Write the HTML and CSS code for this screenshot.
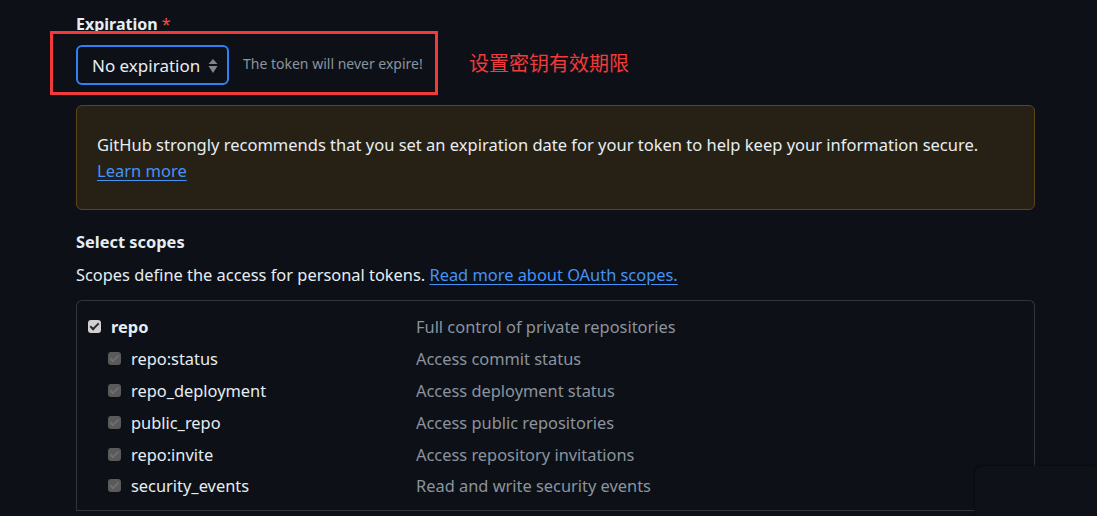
FILE: index.html
```html
<!DOCTYPE html>
<html lang="en">
<head>
<meta charset="utf-8">
<title>Token settings</title>
<link rel="stylesheet" href="styles.css">
</head>
<body>
<div class="page">
  <div class="label">Expiration <span class="req">*</span></div>
  <div class="exp-row">
    <div class="highlight">
      <div class="select">
        <span>No expiration</span>
        <svg class="arrows" width="10" height="16" viewBox="0 0 10 16"><path d="M5 2 L9.5 7 H0.5 Z M5 16 L9.5 9 H0.5 Z" fill="#7d8590"/></svg>
      </div>
      <span class="note">The token will never expire!</span>
    </div>
    <span class="cn">设置密钥有效期限</span>
  </div>
  <div class="flash">
    <p>GitHub strongly recommends that you set an expiration date for your token to help keep your information secure.</p>
    <a class="link" href="#">Learn more</a>
  </div>
  <h3 class="scopes-title">Select scopes</h3>
  <p class="scopes-desc">Scopes define the access for personal tokens. <a class="link" href="#">Read more about OAuth scopes.</a></p>
  <div class="scopes">
    <div class="row main">
      <span class="cb on"></span><span class="name">repo</span><span class="desc">Full control of private repositories</span>
    </div>
    <div class="row sub">
      <span class="cb dis"></span><span class="name">repo:status</span><span class="desc">Access commit status</span>
    </div>
    <div class="row sub">
      <span class="cb dis"></span><span class="name">repo_deployment</span><span class="desc">Access deployment status</span>
    </div>
    <div class="row sub">
      <span class="cb dis"></span><span class="name">public_repo</span><span class="desc">Access public repositories</span>
    </div>
    <div class="row sub">
      <span class="cb dis"></span><span class="name">repo:invite</span><span class="desc">Access repository invitations</span>
    </div>
    <div class="row sub">
      <span class="cb dis"></span><span class="name">security_events</span><span class="desc">Read and write security events</span>
    </div>
    <div class="sep"></div>
  </div>
</div>
<div class="corner"></div>
</body>
</html>
```
FILE: styles.css
```css
html, body {
  margin: 0;
  background: #0d1117;
  height: 100%;
  overflow: hidden;
}
body {
  font-family: "Noto Sans", "Open Sans", sans-serif;
  color: #e6edf3;
  position: relative;
}
.page {
  width: 959px;
  padding-left: 76px;
  padding-top: 14px;
}
.label {
  font-size: 16px;
  font-weight: 700;
  line-height: 20px;
  height: 20px;
}
.req { color: #f85149; font-weight: 400; }
.exp-row {
  display: flex;
  align-items: center;
  margin-left: -26px;
  margin-top: -3px;
}
.highlight {
  border: 3px solid #f23a3a;
  width: 359px;
  height: 58px;
  display: flex;
  align-items: center;
  padding-left: 23px;
  box-sizing: content-box;
}
.select {
  width: 153px;
  height: 40px;
  border: 2px solid #2f81f7;
  border-radius: 6px;
  display: flex;
  align-items: center;
  justify-content: space-between;
  padding: 0 9px 0 14px;
  box-sizing: border-box;
  font-size: 17px;
  margin-top: 4px;
}
.arrows { width: 10px; height: 16px; }
.note {
  margin-left: 14px;
  font-size: 14px;
  color: #8b949e;
  margin-top: 1px;
}
.cn {
  margin-left: 31px;
  color: #f23a3a;
  font-family: "Noto Sans CJK SC", sans-serif;
  font-size: 20px;
  margin-top: -2px;
}
.flash {
  margin-top: 10px;
  background: #272115;
  border: 1px solid #5b4617;
  border-radius: 6px;
  padding: 26px 20px 25px 20px;
  font-size: 16.5px;
  line-height: 26px;
}
.flash p { margin: 0; }
.link { color: #4493f8; text-decoration: underline; text-underline-offset: 3px; }
.scopes-title {
  margin: 20px 0 0 0;
  font-size: 16.4px;
  font-weight: 700;
  line-height: 24px;
}
.scopes-desc {
  margin: 9px 0 0 0;
  font-size: 16.4px;
  line-height: 24px;
}
.scopes {
  margin-top: 13px;
  border: 1px solid #30363d;
  border-bottom: none;
  border-radius: 6px 6px 0 0;
  padding-top: 10px;
}
.row {
  display: flex;
  align-items: center;
  height: 31.8px;
  font-size: 16.4px;
}
.cb {
  width: 13px;
  height: 13px;
  border-radius: 3px;
  flex: none;
  position: relative;
}
.cb::after {
  content: "";
  position: absolute;
  left: 4px;
  top: 1px;
  width: 3px;
  height: 7px;
  border: solid #2b2b2b;
  border-width: 0 2px 2px 0;
  transform: rotate(45deg);
}
.cb.on { background: #d0d0d0; }
.cb.dis { background: #5a5a5a; }
.cb.dis::after { border-color: #6e6e6e; }
.main .cb { margin-left: 11px; }
.sub .cb { margin-left: 31px; }
.name { margin-left: 10px; }
.main .name { font-weight: 700; width: 294px; }
.sub .name { width: 274px; margin-left: 10px; }
.desc { color: #8b949e; margin-left: 11px; }
.sep {
  margin-top: 8px;
  border-top: 1px solid #30363d;
}
.corner {
  position: absolute;
  left: 975px;
  top: 466px;
  right: 0;
  bottom: 0;
  background: #0e1117;
  border-top-left-radius: 8px;
  box-shadow: -1px -1px 2px rgba(0,0,0,0.45);
}
```
